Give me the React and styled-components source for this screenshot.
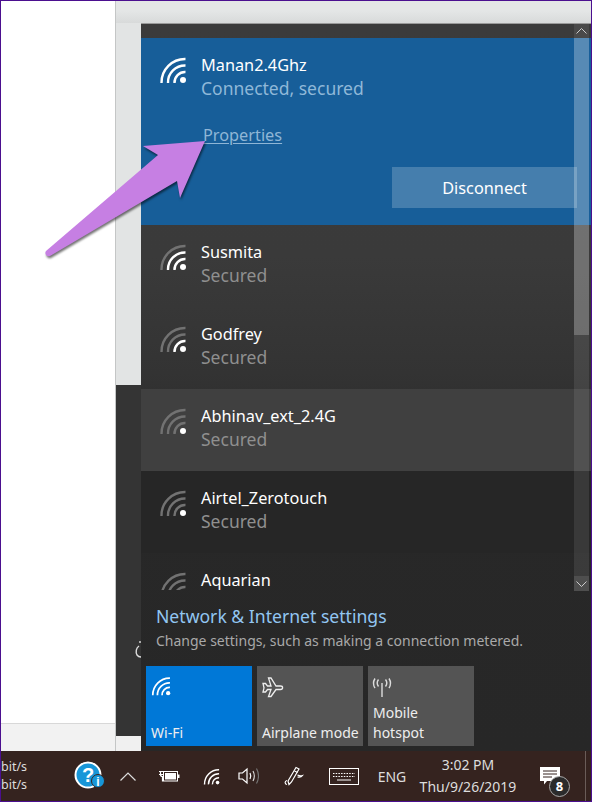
import styled, { createGlobalStyle } from "styled-components";

const networks = [
  { name: "Susmita", level: 2, status: "Secured" },
  { name: "Godfrey", level: 1, status: "Secured" },
  { name: "Abhinav_ext_2.4G", level: 0, status: "Secured", hover: true },
  { name: "Airtel_Zerotouch", level: 0, status: "Secured", dark: true },
  { name: "Aquarian", level: 0 },
];

function WifiIcon({ level = 3, size = 28, dim = "#8a8a8a" }) {
  const on = (n) => (level >= n ? "#fff" : dim);
  return (
    <svg width={size} height={size} viewBox="0 0 28 28" fill="none" strokeWidth="2.4">
      <path d="M2.500 27A23.500 23.500 0 0 1 26.500 3" stroke={on(3)} />
      <path d="M9 27A17 17 0 0 1 26.500 9.500" stroke={on(2)} />
      <path d="M15.500 27A10.500 10.500 0 0 1 26.500 16" stroke={on(1)} />
      <circle cx="24" cy="24" r="3" fill="#fff" />
    </svg>
  );
}

function PlaneIcon() {
  return (
    <svg width="22" height="22" viewBox="0 0 22 22" fill="none" stroke="#eee" strokeWidth="1.300">
      <path d="M1 7.500h2.500l2 2.500H9L6.500 2H9l5 8h4.500c2.800 0 2.800 3.500 0 3.500H14l-5 7H6.500L9 13.500H5.500l-2 2.500H1l1-4.200z" />
    </svg>
  );
}

function HotspotIcon() {
  return (
    <svg width="22" height="22" viewBox="0 0 22 22" fill="none" stroke="#ddd" strokeWidth="1.400">
      <path d="M11 7v14" />
      <path d="M7.500 3.500c-1.500 2-1.500 5 0 7M14.500 3.500c1.500 2 1.500 5 0 7M4 2.500c-1.800 2.800-1.800 6.700 0 9.500M18 2.500c1.800 2.800 1.800 6.700 0 9.500" />
    </svg>
  );
}

function HelpIcon() {
  return (
    <svg width="32" height="30" viewBox="0 0 32 30">
      <circle cx="14" cy="14" r="12.500" fill="#1796d8" stroke="#fff" strokeWidth="2" />
      <text x="14" y="21" textAnchor="middle" fontFamily="Liberation Sans, sans-serif" fontWeight="700" fontSize="20" fill="#fff">?</text>
      <circle cx="24" cy="20" r="6.500" fill="#1796d8" stroke="#35231f" strokeWidth="1" />
      <text x="24" y="25" textAnchor="middle" fontFamily="Liberation Sans, sans-serif" fontWeight="700" fontSize="12" fill="#fff">i</text>
    </svg>
  );
}

function BatteryIcon() {
  return (
    <svg width="21" height="14" viewBox="0 0 21 14" fill="none" stroke="#fff">
      <path d="M0 2.500h5M0 5.500h5M1.500 2.500v3c0 1.500 1 2 2 2v5" strokeWidth="1.200" />
      <rect x="4.500" y="2.500" width="14" height="9.500" strokeWidth="1" />
      <rect x="6" y="4" width="11" height="6.500" fill="#fff" stroke="none" />
      <rect x="19" y="5.500" width="1.500" height="3.500" fill="#fff" stroke="none" />
    </svg>
  );
}

function VolumeIcon() {
  return (
    <svg width="21" height="18" viewBox="0 0 21 18" fill="none">
      <path d="M1 6h3.500L9 2v14l-4.500-4H1z" stroke="#fff" strokeWidth="1.200" />
      <path d="M12 6c1 2 1 4 0 6" stroke="#fff" strokeWidth="1.200" />
      <path d="M15 4c1.600 3 1.600 7 0 10" stroke="#ddd" strokeWidth="1.100" />
      <path d="M18.500 1.500c2.400 4.500 2.400 10.500 0 15" stroke="#777" strokeWidth="1.100" />
    </svg>
  );
}

function PenIcon() {
  return (
    <svg width="20" height="20" viewBox="0 0 20 20" fill="none" stroke="#fff" strokeWidth="1.200">
      <path d="M12 1.500l3 1.500-7.500 13-2.500 2.500-1-3.500z" />
      <path d="M10.500 5l3 1.500" />
      <path d="M13.500 9c2 1 3.500 1 5 .5-1 1.500-3 2-5 1.500" />
      <path d="M3 14.500C.5 15 .5 18 3 18.500" />
    </svg>
  );
}

function KeyboardIcon() {
  return (
    <svg width="30" height="17" viewBox="0 0 30 17" fill="none" stroke="#fff">
      <rect x=".5" y=".5" width="29" height="16" />
      <path d="M4 5.500h22M4 8.500h22" strokeDasharray="1.500 1.200" />
      <path d="M8 12h14" />
    </svg>
  );
}

function NotificationIcon() {
  return (
    <svg width="20" height="18" viewBox="0 0 20 18">
      <path d="M0 0h20v14H7l-3 3.500V14H0z" fill="#fff" />
      <path d="M3 4h14M3 7h14M3 10h9" stroke="#35231f" strokeWidth="1" />
    </svg>
  );
}

export default function App() {
  return (
    <>
      <GlobalStyle />
      <Frame>
        <Desktop>
          <WhitePane>
            <WhiteTop />
            <WhiteBottom />
          </WhitePane>
          <RightSide>
            <TopBand />
            <Body>
              <Strip>
                <StripLight />
                <StripDark>
                  <StripMark viewBox="0 0 6 18" fill="none" stroke="#ddd" strokeWidth="1.400">
                    <path d="M5 1v2M4 6C1 8 .5 12 2 15c1 1.500 3 2 4 2" />
                  </StripMark>
                </StripDark>
                <StripFoot />
              </Strip>
              <Panel>
                <PanelTop />
                <ListArea>
                  <Connected>
                    <RowHead>
                      <IconBox>
                        <WifiIcon level={3} />
                      </IconBox>
                      <RowText>
                        <RowName>Manan2.4Ghz</RowName>
                        <ConnectedStatus>Connected, secured</ConnectedStatus>
                      </RowText>
                    </RowHead>
                    <PropertiesLink>Properties</PropertiesLink>
                    <DisconnectRow>
                      <DisconnectButton>Disconnect</DisconnectButton>
                    </DisconnectRow>
                  </Connected>
                  {networks.map((n) => (
                    <NetworkRow key={n.name} $hover={n.hover} $dark={n.dark}>
                      <RowHead>
                        <IconBox>
                          <WifiIcon level={n.level} dim="#727272" />
                        </IconBox>
                        <RowText>
                          <RowName>{n.name}</RowName>
                          {n.status && <RowStatus>{n.status}</RowStatus>}
                        </RowText>
                      </RowHead>
                    </NetworkRow>
                  ))}
                </ListArea>
                <Scrollbar>
                  <ScrollButton $top>
                    <svg width="11" height="6" viewBox="0 0 11 6" fill="none" stroke="#ccc"><path d="M.5 5.500l5-5 5 5" /></svg>
                  </ScrollButton>
                  <ScrollThumb />
                  <ScrollTrack />
                  <ScrollButton>
                    <svg width="11" height="6" viewBox="0 0 11 6" fill="none" stroke="#ccc"><path d="M.5.500l5 5 5-5" /></svg>
                  </ScrollButton>
                </Scrollbar>
                <PanelFooter>
                  <SettingsLink>Network &amp; Internet settings</SettingsLink>
                  <SettingsHint>Change settings, such as making a connection metered.</SettingsHint>
                  <Tiles>
                    <Tile $active>
                      <TileIcon>
                        <WifiIcon level={3} size={20} />
                      </TileIcon>
                      <TileLabel>Wi-Fi</TileLabel>
                    </Tile>
                    <Tile>
                      <TileIcon>
                        <PlaneIcon />
                      </TileIcon>
                      <TileLabel>Airplane mode</TileLabel>
                    </Tile>
                    <Tile>
                      <TileIcon $shift>
                        <HotspotIcon />
                      </TileIcon>
                      <TileLabel>
                        Mobile
                        <br />
                        hotspot
                      </TileLabel>
                    </Tile>
                  </Tiles>
                </PanelFooter>
              </Panel>
            </Body>
          </RightSide>
          <Arrow width="170" height="125" viewBox="0 0 170 125">
            <path
              d="M170 9L108 14 123 23 11 119C9 122 12 125 15 124L142 49 145 66z"
              fill="#c67fe3"
            />
          </Arrow>
        </Desktop>
        <Taskbar>
          <Speed>
            <span>bit/s</span>
            <span>bit/s</span>
          </Speed>
          <TrayItem $width={40} $left={39}>
            <HelpIcon />
          </TrayItem>
          <TrayItem $width={34} $left={1}>
            <svg width="16" height="9" viewBox="0 0 16 9" fill="none" stroke="#ddd" strokeWidth="1.200"><path d="M.5 8.500L8 1l7.500 7.500" /></svg>
          </TrayItem>
          <TrayItem $width={34} $left={7}>
            <BatteryIcon />
          </TrayItem>
          <TrayItem $width={40} $left={5}>
            <WifiIcon level={3} size={17} />
          </TrayItem>
          <TrayItem $width={34} $left={0}>
            <VolumeIcon />
          </TrayItem>
          <TrayItem $width={34} $left={12}>
            <PenIcon />
          </TrayItem>
          <TrayItem $width={40} $left={13}>
            <KeyboardIcon />
          </TrayItem>
          <TrayText>ENG</TrayText>
          <Clock>
            <span>3:02 PM</span>
            <span>Thu/9/26/2019</span>
          </Clock>
          <NotificationBox>
            <NotificationIcon />
            <Badge>8</Badge>
          </NotificationBox>
          <ShowDesktop />
        </Taskbar>
      </Frame>
    </>
  );
}

const GlobalStyle = createGlobalStyle`
  * { box-sizing: border-box; }
  html, body { margin: 0; padding: 0; background: #fff; }
  body { font-family: "Noto Sans", "Open Sans", sans-serif; }
`;

const Frame = styled.div`
  width: 592px;
  height: 802px;
  border: 1px solid #4b0f8f;
  display: flex;
  flex-direction: column;
  overflow: hidden;
`;

const Desktop = styled.div`
  position: relative;
  height: 750px;
  display: flex;
`;

const WhitePane = styled.div`
  width: 115px;
  display: flex;
  flex-direction: column;
  border-right: 1px solid #c4c6c6;
`;

const WhiteTop = styled.div`
  flex: 1;
  background: #fff;
`;

const WhiteBottom = styled.div`
  height: 28px;
  background: #f2f2f2;
  border-top: 1px solid #d8d8d8;
`;

const RightSide = styled.div`
  flex: 1;
  display: flex;
  flex-direction: column;
`;

const TopBand = styled.div`
  height: 22px;
  background: linear-gradient(#e4e6e6 45%, #d8dada 100%);
`;

const Body = styled.div`
  flex: 1;
  display: flex;
  min-height: 0;
`;

const Strip = styled.div`
  width: 25px;
  display: flex;
  flex-direction: column;
`;

const StripLight = styled.div`
  height: 362px;
  background: #e2e4e4;
`;

const StripDark = styled.div`
  position: relative;
  height: 351px;
  background: #343434;
`;

const StripMark = styled.svg`
  position: absolute;
  right: 0;
  top: 255px;
  width: 6px;
  height: 18px;
`;

const StripFoot = styled.div`
  flex: 1;
  background: #f0f0f0;
`;

const Panel = styled.div`
  position: relative;
  flex: 1;
  display: flex;
  flex-direction: column;
  border-top: 1px solid #9a9a9a;
  background: linear-gradient(#3b3b3b 0, #3a3a3a 32%, #333 48%, #282828 62%, #272727 100%);
`;

const PanelTop = styled.div`
  height: 14px;
`;

const ListArea = styled.div`
  height: 552px;
  overflow: hidden;
`;

const Connected = styled.div`
  height: 187px;
  background: #175e99;
  padding-top: 15px;
`;

const RowHead = styled.div`
  display: flex;
  align-items: flex-start;
`;

const IconBox = styled.div`
  width: 60px;
  padding: 3px 0 0 18px;
  flex-shrink: 0;
`;

const RowText = styled.div`
  display: flex;
  flex-direction: column;
`;

const RowName = styled.div`
  color: #fff;
  font-size: 16.300px;
  line-height: 24px;
`;

const RowStatus = styled.div`
  margin-top: -1px;
  color: #8f8f8f;
  font-size: 17.500px;
  line-height: 24px;
`;

const ConnectedStatus = styled(RowStatus)`
  color: #8fb8d8;
`;

const PropertiesLink = styled.div`
  margin: 25px 0 0 62px;
  width: fit-content;
  color: #8fb6d6;
  font-size: 16.300px;
  line-height: 20px;
  text-decoration: underline;
  text-underline-offset: 2px;
  text-decoration-thickness: 1px;
`;

const DisconnectRow = styled.div`
  display: flex;
  justify-content: flex-end;
  margin-top: 22px;
  padding-right: 14px;
`;

const DisconnectButton = styled.div`
  width: 185px;
  height: 41px;
  display: flex;
  align-items: center;
  justify-content: center;
  background: rgba(255, 255, 255, 0.2);
  color: #fff;
  font-size: 16.300px;
`;

const NetworkRow = styled.div`
  height: 82px;
  padding-top: 15px;
  background: ${(p) => (p.$hover ? "#404040" : p.$dark ? "#262626" : "transparent")};
`;

const Scrollbar = styled.div`
  position: absolute;
  top: 0;
  right: 2px;
  width: 15px;
  height: 567px;
  display: flex;
  flex-direction: column;
`;

const ScrollButton = styled.div`
  height: ${(p) => (p.$top ? "14px" : "15px")};
  display: flex;
  align-items: center;
  justify-content: center;
  background: ${(p) => (p.$top ? "#4a4a4a" : "#4e4e4e")};
`;

const ScrollThumb = styled.div`
  height: 297px;
  background: rgba(255, 255, 255, 0.28);
`;

const ScrollTrack = styled.div`
  flex: 1;
  background: rgba(255, 255, 255, 0.09);
`;

const PanelFooter = styled.div`
  flex: 1;
  padding: 14px 0 0 5px;
  display: flex;
  flex-direction: column;
`;

const SettingsLink = styled.div`
  margin-left: 10px;
  color: #92c6f2;
  font-size: 17.600px;
  line-height: 24px;
`;

const SettingsHint = styled.div`
  margin: 3px 0 0 10px;
  color: #a9a9a9;
  font-size: 14px;
  line-height: 20px;
`;

const Tiles = styled.div`
  display: flex;
  gap: 5px;
  margin-top: 15px;
`;

const Tile = styled.div`
  width: 106px;
  height: 80px;
  padding: 10px 0 3px 5px;
  display: flex;
  flex-direction: column;
  justify-content: space-between;
  background: ${(p) => (p.$active ? "#0078d7" : "#545454")};
  color: #eee;
`;

const TileIcon = styled.div`
  height: 22px;
  margin-left: ${(p) => (p.$shift ? "-2px" : "0")};
`;

const TileLabel = styled.div`
  font-size: 14px;
  line-height: 20px;
  white-space: nowrap;
`;

const Arrow = styled.svg`
  position: absolute;
  left: 34px;
  top: 131px;
  filter: drop-shadow(1px 2px 1px rgba(0, 0, 0, 0.55));
`;

const Taskbar = styled.div`
  flex: 1;
  display: flex;
  align-items: center;
  background: #35231f;
  color: #eee;
`;

const Speed = styled.div`
  width: 30px;
  display: flex;
  flex-direction: column;
  align-items: flex-end;
  padding-right: 8px;
  font-size: 12.500px;
  line-height: 18px;
  color: #ddd;
  direction: rtl;
  overflow: hidden;
`;

const TrayItem = styled.div`
  width: ${(p) => p.$width}px;
  margin-left: ${(p) => p.$left}px;
  display: flex;
  align-items: center;
  justify-content: center;
`;

const TrayText = styled.div`
  width: 46px;
  margin-left: 5px;
  font-size: 14px;
  text-align: center;
  color: #ddd;
`;

const Clock = styled.div`
  width: 100px;
  margin-left: 3px;
  display: flex;
  flex-direction: column;
  align-items: center;
  font-size: 14px;
  line-height: 22px;
  color: #ddd;
`;

const NotificationBox = styled.div`
  position: relative;
  width: 40px;
  margin-left: 22px;
  height: 34px;
  padding-top: 8px;
`;

const Badge = styled.div`
  position: absolute;
  left: 9px;
  top: 17px;
  width: 21px;
  height: 21px;
  border-radius: 50%;
  border: 1px solid #aaa;
  background: #2b2b2b;
  color: #fff;
  font-size: 13px;
  font-weight: 700;
  line-height: 19px;
  text-align: center;
`;

const ShowDesktop = styled.div`
  width: 1px;
  height: 100%;
  margin-left: 5px;
  background: #6a5c58;
`;
